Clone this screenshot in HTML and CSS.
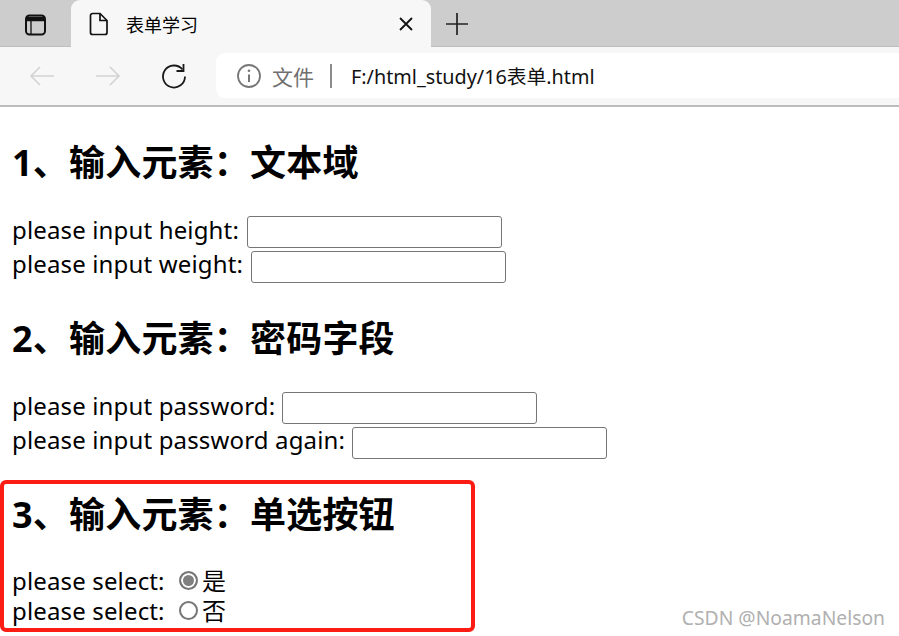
FILE: index.html
```html
<!DOCTYPE html>
<html lang="zh">
<head>
<meta charset="utf-8">
<title>表单学习</title>
<link rel="stylesheet" href="styles.css">
</head>
<body>
<header class="chrome">
  <div class="tabstrip">
    <div class="side-btn">
      <svg width="24" height="24" viewBox="0 0 24 24" fill="none" stroke="#111" stroke-width="2"><rect x="2" y="2.500" width="19" height="19" rx="3.500"/><path d="M2 6h19" stroke-width="4.500"/><path d="M7 8v13" stroke-width="1.300"/></svg>
    </div>
    <div class="tab">
      <svg class="tab-doc" width="20" height="24" viewBox="0 0 20 24" fill="none" stroke="#111" stroke-width="1.700"><path d="M3.500 1.500h7.500l7 7v12a2 2 0 0 1-2 2h-12.500a2 2 0 0 1-2-2v-17a2 2 0 0 1 2-2z"/><path d="M11 1.500v7h7"/></svg>
      <span class="tab-title">表单学习</span>
      <svg class="tab-close" width="14" height="14" viewBox="0 0 14 14" stroke="#111" stroke-width="1.800"><path d="M1 1l12 12M13 1l-12 12"/></svg>
    </div>
    <svg class="new-tab" width="22" height="22" viewBox="0 0 22 22" stroke="#222" stroke-width="1.700"><path d="M11 0v22M0 11h22"/></svg>
  </div>
  <div class="toolbar">
    <svg class="nav" width="26" height="22" viewBox="0 0 26 22" fill="none" stroke="#d4d4d4" stroke-width="1.700"><path d="M25 11h-23M11 2l-9 9 9 9"/></svg>
    <svg class="nav nav-fwd" width="26" height="22" viewBox="0 0 26 22" fill="none" stroke="#d4d4d4" stroke-width="1.700"><path d="M1 11h23M15 2l9 9-9 9"/></svg>
    <svg class="nav-reload" width="26" height="26" viewBox="0 0 26 26" fill="none" stroke="#1a1a1a" stroke-width="1.800"><path d="M21.500 6.500a11 11 0 1 0 2.500 7"/><path d="M22.500 1v7h-7"/></svg>
    <div class="omnibox">
      <svg class="info" width="26" height="26" viewBox="0 0 26 26" fill="none" stroke="#777" stroke-width="1.800"><circle cx="13" cy="13" r="11"/><path d="M13 11.500v7.500" stroke-width="2"/><circle cx="13" cy="7.700" r="1.300" fill="#777" stroke="none"/></svg>
      <span class="scheme">文件</span>
      <span class="sep"></span>
      <span class="url">F:/html_study/16表单.html</span>
    </div>
  </div>
</header>
<main class="page">
  <h2>1、输入元素：文本域</h2>
  <div class="row">please input height: <input type="text"></div>
  <div class="row">please input weight: <input type="text"></div>
  <h2>2、输入元素：密码字段</h2>
  <div class="row">please input password: <input type="password"></div>
  <div class="row">please input password again: <input type="password"></div>
  <h2>3、输入元素：单选按钮</h2>
  <div class="row row-radio">please select: <input type="radio" name="c" checked>是</div>
  <div class="row row-radio">please select: <input type="radio" name="c">否</div>
</main>
<div class="highlight"></div>
<div class="watermark">CSDN @NoamaNelson</div>
</body>
</html>
```
FILE: styles.css
```css
* { box-sizing: border-box; }
html, body { margin: 0; padding: 0; height: 636px; overflow: hidden; background: #fff; }
body { position: relative; font-family: "Noto Sans", "Noto Sans CJK SC", sans-serif; color: #000; }
.chrome { height: 107px; background: #f7f7f7; border-bottom: 2px solid #bcbcbc; }
.tabstrip { height: 47px; background: #cdcdcd; border-bottom: 1px solid #bdbdbd; display: flex; align-items: flex-start; }
.side-btn { width: 71px; height: 47px; display: flex; align-items: center; justify-content: center; padding-top: 2px; }
.tab { width: 360px; height: 47px; background: #f7f7f7; border-radius: 9px 9px 0 0; display: flex; align-items: center; padding: 0 18px; }
.tab-doc { margin-right: 17px; }
.tab-title { font-size: 18px; flex: 1; }
.new-tab { margin: 13px 0 0 15px; }
.toolbar { height: 58px; display: flex; align-items: center; padding: 0 0 0 29px; }
.nav-fwd { margin-left: 40px; }
.nav-reload { margin-left: 40px; }
.omnibox { margin-left: 29px; flex: 1; height: 45px; margin-bottom: 1px; background: #fff; border-radius: 9px 0 0 9px; display: flex; align-items: center; padding-left: 20px; }
.scheme { margin-left: 10px; font-size: 21px; color: #707070; }
.sep { width: 2px; height: 24px; background: #8c8c8c; margin: 0 19px 0 16px; }
.url { font-size: 19.800px; color: #111; }
.page { padding: 0 12px; }
h2 { font-size: 36px; line-height: 44px; margin: 0; padding-top: 36px; padding-bottom: 28px; font-weight: 700; letter-spacing: .2px; }
h2:first-child { padding-top: 34px; }
.row { font-size: 24px; line-height: 34px; height: 34px; white-space: nowrap; letter-spacing: .15px; }
.row-radio { height: 30px; line-height: 30px; }
h2 + .row-radio { margin-top: 1px; }
input[type=text], input[type=password] { width: 255px; height: 32px; border: 1.500px solid #767676; border-radius: 3px; background: #fff; padding: 0; margin: 0 0 2px 2px; vertical-align: middle; }
input[type=password] { margin-left: 0; }
.row + .row input[type=text], .row + .row input[type=password] { margin-bottom: 0; }
input[type=radio] { appearance: none; width: 19px; height: 19px; margin: 0 4px 0 8px; border: 2px solid #767676; border-radius: 50%; background: #fff; vertical-align: 0; }
input[type=radio]:checked { background: #808080; box-shadow: inset 0 0 0 2px #fff; }
.highlight { position: absolute; left: 0; top: 480px; width: 475px; height: 152px; border: 4px solid #fc1c14; border-radius: 6px; }
.watermark { position: absolute; right: 14px; top: 605px; font-size: 19.300px; line-height: 26px; color: #b0b0b0; }
```
